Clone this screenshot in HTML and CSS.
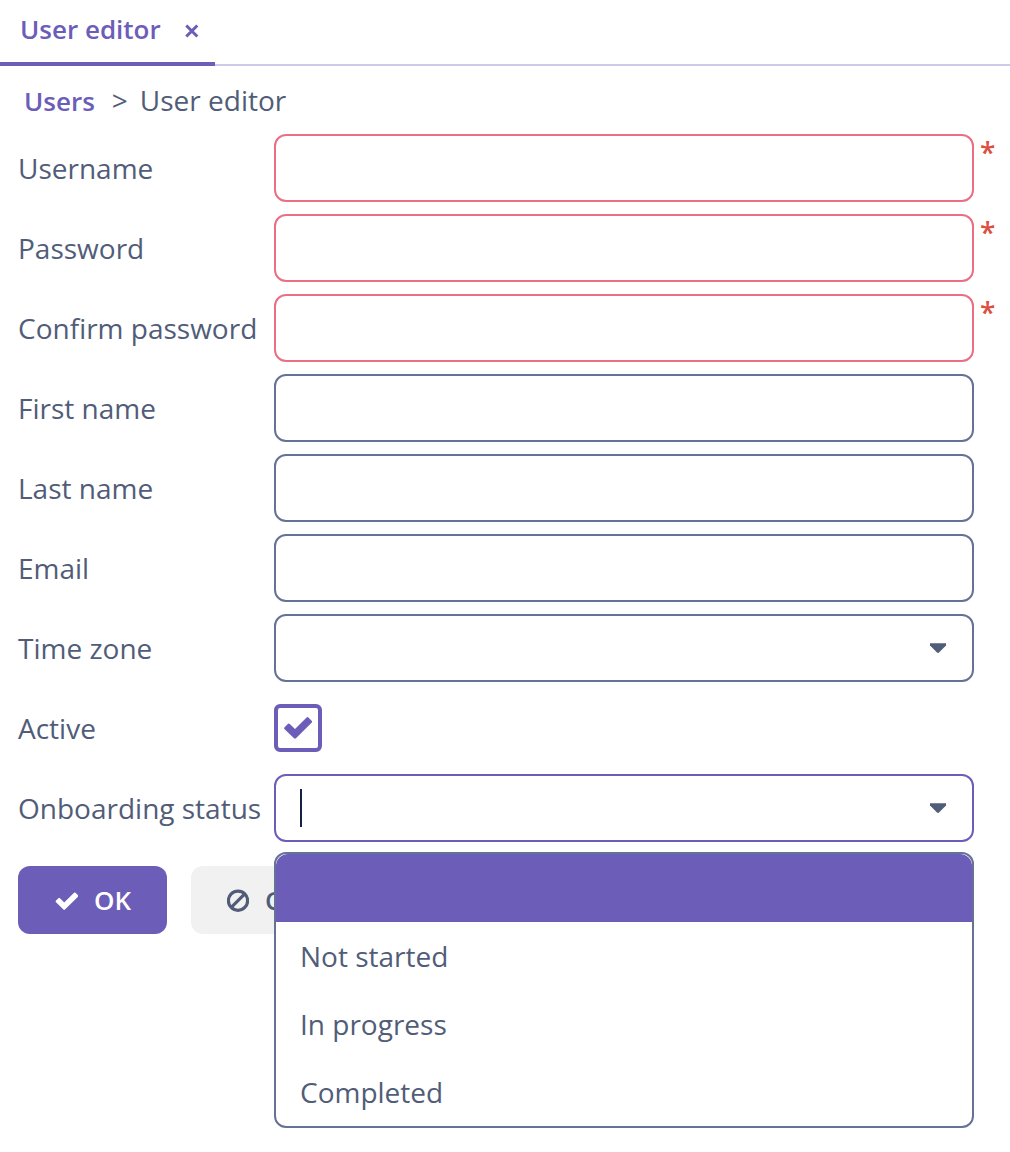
FILE: index.html
```html
<!DOCTYPE html>
<html lang="en">
<head>
<meta charset="utf-8">
<meta name="viewport" content="width=device-width, initial-scale=1">
<title>User editor</title>
<link rel="stylesheet" href="styles.css">
</head>
<body>
<header class="tabs">
  <div class="tab">
    <span>User editor</span>
    <button class="tab-close" type="button" aria-label="Close tab">
      <svg width="14" height="14" viewBox="0 0 14 14" aria-hidden="true"><path d="M1.3 1.5L12.3 12.5M12.3 1.5L1.3 12.5" fill="none" stroke="currentColor" stroke-width="3"/></svg>
    </button>
  </div>
</header>
<nav class="breadcrumbs" aria-label="Breadcrumbs">
  <a href="#users">Users</a>
  <span class="separator">&gt;</span>
  <span>User editor</span>
</nav>
<form class="editor">
  <div class="row">
    <label for="username">Username</label>
    <div class="control"><input class="field invalid" id="username" type="text" required><span class="mark">*</span></div>
  </div>
  <div class="row">
    <label for="password">Password</label>
    <div class="control"><input class="field invalid" id="password" type="password" required><span class="mark">*</span></div>
  </div>
  <div class="row">
    <label for="confirm">Confirm password</label>
    <div class="control"><input class="field invalid" id="confirm" type="password" required><span class="mark">*</span></div>
  </div>
  <div class="row">
    <label for="first-name">First name</label>
    <div class="control"><input class="field" id="first-name" type="text"></div>
  </div>
  <div class="row">
    <label for="last-name">Last name</label>
    <div class="control"><input class="field" id="last-name" type="text"></div>
  </div>
  <div class="row">
    <label for="email">Email</label>
    <div class="control"><input class="field" id="email" type="email"></div>
  </div>
  <div class="row">
    <label for="time-zone">Time zone</label>
    <div class="control">
      <select class="field" id="time-zone"><option value=""></option></select>
      <svg class="arrow" width="18" height="12" viewBox="0 0 18 12" aria-hidden="true"><path d="M1 1.3H17V3.5L10 10.5Q9 11.4 8 10.5L1 3.5Z" fill="currentColor"/></svg>
    </div>
  </div>
  <div class="row">
    <label for="active">Active</label>
    <div class="control check">
      <input class="checkbox" id="active" type="checkbox" checked>
      <svg class="tick" width="28" height="22" viewBox="0 0 28 22" aria-hidden="true"><path d="M1.6 11.2L4.8 7.9L11 14L23.6 1.6L26.6 4.8L11 20.2Z" fill="currentColor" stroke="currentColor" stroke-width="2.8" stroke-linejoin="round"/></svg>
    </div>
  </div>
  <div class="row">
    <label for="status">Onboarding status</label>
    <div class="control">
      <input class="field active" id="status" type="text" role="combobox" aria-expanded="true" aria-controls="status-list" autocomplete="off">
      <span class="caret"></span>
      <svg class="arrow" width="18" height="12" viewBox="0 0 18 12" aria-hidden="true"><path d="M1 1.3H17V3.5L10 10.5Q9 11.4 8 10.5L1 3.5Z" fill="currentColor"/></svg>
      <ul class="options" id="status-list" role="listbox" aria-label="Onboarding status">
        <li class="option selected" role="option" aria-selected="true"></li>
        <li class="option" role="option" aria-selected="false">Not started</li>
        <li class="option" role="option" aria-selected="false">In progress</li>
        <li class="option" role="option" aria-selected="false">Completed</li>
      </ul>
    </div>
  </div>
  <div class="actions">
    <button class="button primary" type="submit">
      <svg width="24" height="24" viewBox="0 0 24 24" aria-hidden="true"><path d="M2.8 13.4L5.2 11L10.2 16L20.8 5.6L23.2 8L10.2 20.8Z" fill="currentColor" stroke="currentColor" stroke-width="2.2" stroke-linejoin="round"/></svg>
      OK
    </button>
    <button class="button" type="button">
      <svg width="22" height="24" viewBox="0 0 22 24" aria-hidden="true"><circle cx="11" cy="12.7" r="9.6" fill="none" stroke="currentColor" stroke-width="3.2"/><path d="M4.5 19.2L17.5 6.2" stroke="currentColor" stroke-width="3.2"/></svg>
      Cancel
    </button>
  </div>
</form>
</body>
</html>
```
FILE: styles.css
```css
:root {
  --accent: #6c5db9;
  --text: #515d78;
  --border: #657295;
  --error: #eb6e82;
}

* {
  box-sizing: border-box;
}

body {
  min-height: 100vh;
  margin: 0;
  background: #fff;
  color: var(--text);
  font: 28px/40px "Open Sans", sans-serif;
}

button,
input,
select {
  margin: 0;
  color: inherit;
  font: inherit;
}

.tabs {
  display: flex;
  height: 66px;
  box-shadow: inset 0 -2px #cfc9e9;
}

.tab {
  display: flex;
  align-items: center;
  gap: 24px;
  padding: 0 16px 4px 20px;
  border-bottom: 4px solid var(--accent);
  color: var(--accent);
  font-size: 26px;
  font-weight: 600;
}

.tab-close {
  display: flex;
  padding: 4px 0 0;
  border: 0;
  background: none;
}

.breadcrumbs {
  display: flex;
  align-items: baseline;
  padding: 14px 24px 13px;
}

.breadcrumbs a {
  color: var(--accent);
  font-size: 26px;
  font-weight: 600;
  text-decoration: none;
}

.separator {
  padding: 0 12px 0 17px;
}

.editor {
  display: flex;
  flex-direction: column;
  gap: 12px;
  padding: 0 36px 24px 18px;
}

.row {
  display: grid;
  grid-template-columns: 256px 1fr;
  align-items: center;
  min-height: 68px;
}

.control {
  display: flex;
  position: relative;
}

.field {
  width: 100%;
  height: 68px;
  padding: 0 24px;
  border: 2px solid var(--border);
  border-radius: 12px;
  outline: 0;
  background: #fff;
  appearance: none;
}

.field.invalid {
  border-color: var(--error);
}

.field.active {
  border-color: var(--accent);
}

.mark {
  position: absolute;
  top: -2px;
  left: calc(100% + 6px);
  color: #dc4f3f;
  font-weight: 600;
}

.arrow {
  position: absolute;
  top: 28px;
  right: 27px;
  pointer-events: none;
}

.check {
  width: 48px;
}

.checkbox {
  width: 48px;
  height: 48px;
  border: 4px solid var(--accent);
  border-radius: 6px;
  appearance: none;
}

.tick {
  position: absolute;
  top: 13px;
  left: 10px;
  color: var(--accent);
  pointer-events: none;
}

.caret {
  position: absolute;
  top: 15px;
  left: 26px;
  width: 2px;
  height: 38px;
  background: #132144;
}

.options {
  position: absolute;
  z-index: 1;
  top: calc(100% + 10px);
  left: 0;
  width: 100%;
  margin: 0;
  padding: 0;
  overflow: hidden;
  border: 2px solid var(--border);
  border-radius: 12px;
  background: #fff;
  list-style: none;
}

.option {
  height: 68px;
  padding: 14px 24px;
}

.option.selected {
  border-radius: 12px 12px 0 0;
  background: var(--accent);
}

.actions {
  display: flex;
  gap: 24px;
  padding-top: 12px;
}

.button {
  display: flex;
  align-items: center;
  gap: 16px;
  height: 68px;
  padding: 0 36px;
  border: 0;
  border-radius: 12px;
  background: #f1f1f1;
  font-size: 26px;
  font-weight: 600;
}

.button.primary {
  background: var(--accent);
  color: #fff;
}
```
